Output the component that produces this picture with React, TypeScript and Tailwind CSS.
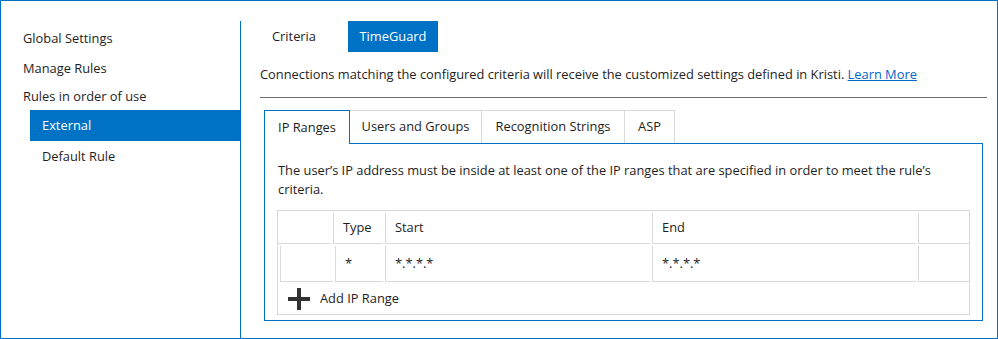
import React from "react";

const font = { fontFamily: '"Open Sans", "Noto Sans", sans-serif' };

function SideItem({ label, active, indent }: { label: string; active?: boolean; indent?: boolean }) {
  return (
    <div
      className={
        "flex items-center " +
        (indent ? "ml-[29px] pl-[12px] h-[31px] " : "pl-[22px] h-[30px] ") +
        (active ? "bg-[#0072c6] text-white" : "text-[#1e1e1e]")
      }
    >
      {label}
    </div>
  );
}

function Cell({ w, children, left = true }: { w: string; children?: React.ReactNode; left?: boolean }) {
  return (
    <div className={`${w} shrink-0 flex items-center pl-[9px] border-b border-[#d9d9d9] ${left ? "border-l" : ""}`}>
      {children}
    </div>
  );
}

export default function App() {
  const tabs = ["Users and Groups", "Recognition Strings", "ASP"];
  const tabW = ["w-[132px]", "w-[143px]", "w-[50px]"];

  return (
    <div className="w-[998px] h-[339px] border border-[#0072c6] bg-white flex text-[12.85px] text-[#1e1e1e]" style={font}>
      {/* sidebar */}
      <div className="w-[240px] mt-[20px] border-r border-[#0072c6] pt-[3px] shrink-0">
        <SideItem label="Global Settings" />
        <SideItem label="Manage Rules" />
        <div className="pl-[22px] h-[26px] flex items-center">Rules in order of use</div>
        <SideItem label="External" active indent />
        <SideItem label="Default Rule" indent />
      </div>

      {/* main */}
      <div className="flex-1 pt-[20px] pl-[19px] pr-[10px]">
        <div className="flex h-[31px] ml-[5px] gap-[25px]">
          <div className="px-[7px] flex items-center">Criteria</div>
          <div className="w-[90px] flex items-center justify-center bg-[#0072c6] text-white">TimeGuard</div>
        </div>
        <div className="h-[45px] flex items-center whitespace-nowrap">
          Connections matching the configured criteria will receive the customized settings defined in Kristi.&nbsp;
          <span className="text-[#0066cc] underline">Learn More</span>
        </div>
        <div className="h-px bg-[#6d6d6d]" />

        <div className="ml-[4px] mr-[4px] mt-[12px]">
          <div className="flex h-[33px]">
            <div className="relative z-10 w-[86px] h-[34px] -mb-px bg-white border border-b-0 border-[#0072c6] flex items-center justify-center">
              IP Ranges
            </div>
            {tabs.map((t, i) => (
              <div
                key={t}
                className={`${tabW[i]} border-t border-r border-[#d9d9d9] flex items-center justify-center`}
              >
                {t}
              </div>
            ))}
          </div>
          <div className="h-[178px] border border-[#0072c6] pt-[17px] pl-[12px]">
            <div className="pl-[1px] leading-[19px]">
              <div className="whitespace-nowrap">
                The user’s IP address must be inside at least one of the IP ranges that are specified in order to meet the rule’s
              </div>
              <div>criteria.</div>
            </div>

            <div className="mt-[11px] w-[693px] h-[105px] border border-[#d9d9d9] flex flex-col">
              <div className="flex gap-[2px] pt-[2px] h-[33px]">
                <Cell w="w-[53px]" left={false} />
                <Cell w="w-[50px]">Type</Cell>
                <Cell w="w-[265px]">Start</Cell>
                <Cell w="w-[264px]">End</Cell>
                <Cell w="w-[51px]" />
              </div>
              <div className="flex gap-[2px] pt-[2px] h-[38px]">
                <Cell w="w-[53px] ml-[2px]" />
                <Cell w="w-[48px]">*</Cell>
                <Cell w="w-[265px]">*.*.*.*</Cell>
                <Cell w="w-[264px]">*.*.*.*</Cell>
                <Cell w="w-[51px]" />
              </div>
              <div className="flex-1 flex items-center pl-[10px] gap-[10px] pt-[2px]">
                <svg width="22" height="22" viewBox="0 0 22 22">
                  <rect x="9" y="0" width="4" height="22" fill="#333" />
                  <rect x="0" y="9" width="22" height="4" fill="#333" />
                </svg>
                <span>Add IP Range</span>
              </div>
            </div>
          </div>
        </div>
      </div>
    </div>
  );
}
